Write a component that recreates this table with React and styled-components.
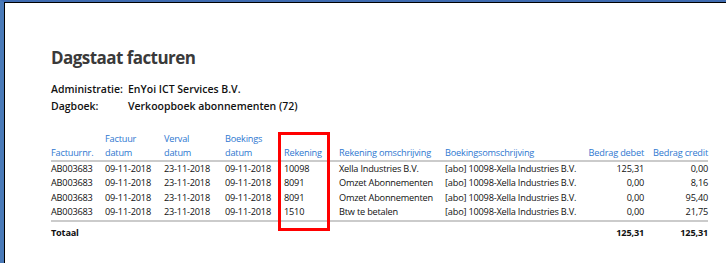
import React from "react";
import styled, { createGlobalStyle } from "styled-components";

const Global = createGlobalStyle`
  html, body { margin: 0; padding: 0; background: #fff; }
  body { font-family: "Open Sans", "Noto Sans", sans-serif; }
`;

const Frame = styled.div`
  width: 726px;
  height: 263px;
  box-sizing: border-box;
  border-left: 4px solid #4a7ab8;
  border-top: 2px solid #3f6bb0;
  overflow: hidden;
`;

const Sheet = styled.div`
  height: 100%;
  box-sizing: border-box;
  border-left: 1px solid #000;
  border-top: 1px solid #000;
  background: #fff;
  padding: 44px 0 0 46px;
`;

const Title = styled.h1`
  margin: 0;
  font-size: 17px;
  font-weight: 700;
  color: #3a3a3a;
  letter-spacing: -0.55px;
  line-height: 22px;
`;

const Meta = styled.div`
  margin-top: 13px;
  display: grid;
  grid-template-columns: 77px auto;
  row-gap: 2px;
  font-size: 10.5px;
  font-weight: 600;
  color: #111;
  line-height: 15px;
`;

const Report = styled.div`
  position: relative;
  margin-top: 18px;
  width: 657px;
`;

const Grid = styled.div`
  display: grid;
  grid-template-columns: 54px 59px 61px 59px 55px 106px 140px 59px 64px;
  font-size: 9.2px;
  letter-spacing: -0.2px;
  line-height: 14px;
  color: #111;
`;

const Head = styled.div`
  color: #2e77d0;
  text-align: ${(p) => (p.$right ? "right" : "left")};
  border-bottom: 2px solid #cbcbcb;
  white-space: nowrap;
  display: flex;
  flex-direction: column;
  justify-content: flex-end;
  height: 30px;
  box-sizing: border-box;
`;

const Cell = styled.div`
  text-align: ${(p) => (p.$right ? "right" : "left")};
  white-space: nowrap;
  height: ${(p) => (p.$last ? "17.3px" : "14.3px")};
  line-height: 14.3px;
  box-sizing: border-box;
  border-bottom: ${(p) => (p.$last ? "2px solid #cbcbcb" : "none")};
`;

const Total = styled.div`
  text-align: ${(p) => (p.$right ? "right" : "left")};
  font-weight: 700;
  padding-top: 4px;
  white-space: nowrap;
`;

const Highlight = styled.div`
  position: absolute;
  left: 227px;
  top: 0;
  width: 52px;
  height: 99px;
  border: 3px solid #ff0000;
  box-sizing: border-box;
  pointer-events: none;
`;

const headers = [
  ["Factuurnr."],
  ["Factuur", "datum"],
  ["Verval", "datum"],
  ["Boekings", "datum"],
  ["Rekening"],
  ["Rekening omschrijving"],
  ["Boekingsomschrijving"],
  ["Bedrag debet"],
  ["Bedrag credit"],
];

const rows = [
  ["AB003683", "09-11-2018", "23-11-2018", "09-11-2018", "10098", "Xella Industries B.V.", "[abo] 10098-Xella Industries B.V.", "125,31", "0,00"],
  ["AB003683", "09-11-2018", "23-11-2018", "09-11-2018", "8091", "Omzet Abonnementen", "[abo] 10098-Xella Industries B.V.", "0,00", "8,16"],
  ["AB003683", "09-11-2018", "23-11-2018", "09-11-2018", "8091", "Omzet Abonnementen", "[abo] 10098-Xella Industries B.V.", "0,00", "95,40"],
  ["AB003683", "09-11-2018", "23-11-2018", "09-11-2018", "1510", "Btw te betalen", "[abo] 10098-Xella Industries B.V.", "0,00", "21,75"],
];

const totals = ["Totaal", "", "", "", "", "", "", "125,31", "125,31"];

export default function App() {
  return (
    <>
      <Global />
      <Frame>
        <Sheet>
          <Title>Dagstaat facturen</Title>
          <Meta>
            <span>Administratie:</span>
            <span>EnYoi ICT Services B.V.</span>
            <span>Dagboek:</span>
            <span>Verkoopboek abonnementen (72)</span>
          </Meta>
          <Report>
            <Grid>
              {headers.map((h, i) => (
                <Head key={i} $right={i >= 7}>
                  {h.map((l) => (
                    <span key={l}>{l}</span>
                  ))}
                </Head>
              ))}
              {rows.map((r, ri) =>
                r.map((c, ci) => (
                  <Cell key={ri + "-" + ci} $right={ci >= 7} $last={ri === rows.length - 1}>
                    {c}
                  </Cell>
                ))
              )}
              {totals.map((t, i) => (
                <Total key={i} $right={i >= 7}>
                  {t}
                </Total>
              ))}
            </Grid>
            <Highlight />
          </Report>
        </Sheet>
      </Frame>
    </>
  );
}
